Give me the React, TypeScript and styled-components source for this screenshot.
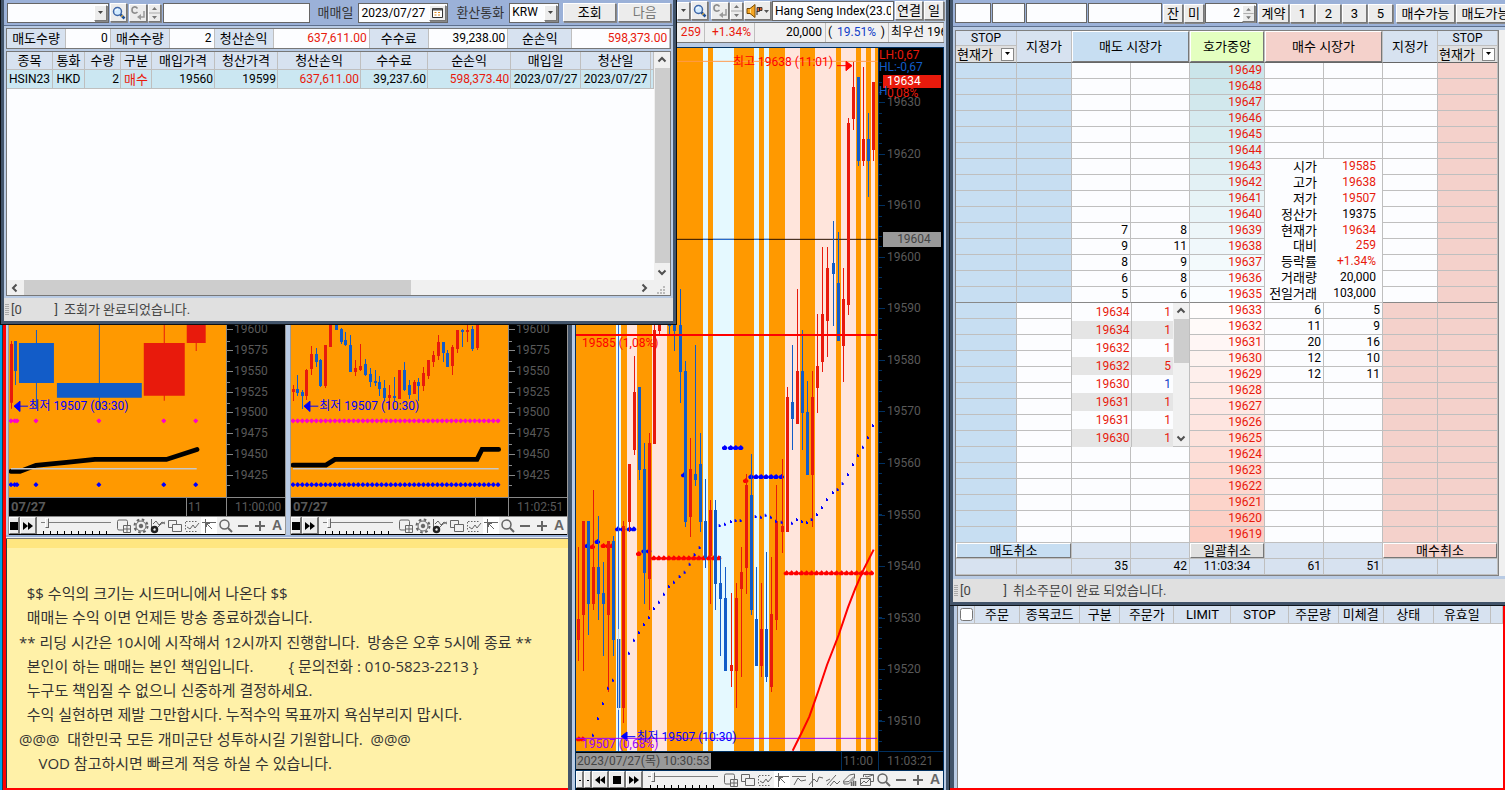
import React from "react";
import styled, { createGlobalStyle, css } from "styled-components";

const c = {
  slate: "#42546a",
  frame: "#b9cbe4",
  bar: "#9bb1d8",
  head: "#d7e2f0",
  sell: "#c7def2",
  buy: "#f4d1cb",
  red: "#e81a0c",
  blue: "#125cc8",
  line: "#bfbfbf",
  paper: "#fcfdff",
  orange: "#ff9900",
  cyan: "#e5f9ff",
  pink: "#ffe5dc",
  navy: "#003060",
  dim: "#595959",
};

const Global = createGlobalStyle`
  *, *::before, *::after { box-sizing: border-box; }
  html, body { margin: 0; padding: 0; }
  body, button, input, select, table {
    font-family: Roboto, "Noto Sans CJK KR", sans-serif;
    font-size: 13px;
    line-height: 15px;
    color: #000;
  }
  input { font-size: 12px; }
  button, input, select { margin: 0; padding: 0; border-radius: 0; }
`;

/* ---------- desktop ---------- */

const Desktop = styled.main`
  position: relative;
  display: grid;
  grid-template-columns: 572fr 377fr 556fr;
  min-height: 100vh;
  overflow: hidden;
  background: #00a2e8;
`;

const LeftColumn = styled.div`
  display: flex;
  flex-direction: column;
  min-width: 0;
  padding-top: 325px;
  border-left: 2px solid #00a2e8;
  border-right: 4px solid ${c.slate};
  background: #2b3844;
`;

const RedFrame = styled.div`
  flex: 1;
  display: flex;
  flex-direction: column;
  margin-left: 1px;
  border-left: 3px solid #f00;
  border-bottom: 2px solid #f00;
`;

/* ---------- shared controls ---------- */

const Bevel = css`
  border: 1px solid;
  border-color: #fff #777 #777 #fff;
  background: #ececec;
`;

const Button = styled.button<{ $w?: number; $muted?: boolean }>`
  ${Bevel}
  display: flex;
  align-items: center;
  justify-content: center;
  flex: none;
  height: 19px;
  white-space: nowrap;
  overflow: hidden;
  width: ${(p) => (p.$w ? `${p.$w}px` : "auto")};
  color: ${(p) => (p.$muted ? "#777" : "#000")};
  box-shadow: 1px 1px 0 #888;
`;

const Field = styled.input<{ $w?: number; $align?: string }>`
  ${(p) => (p.$w ? `flex: none; width: ${p.$w}px;` : "flex: 1; min-width: 0;")}
  height: 20px;
  padding: 0 2px;
  border: 1px solid #666;
  background: ${c.paper};
  text-align: ${(p) => p.$align || "left"};
`;

const Combo = styled.div<{ $w: number }>`
  display: flex;
  flex: none;
  align-items: center;
  width: ${(p) => p.$w}px;
  height: 20px;
  padding-right: 1px;
  border: 1px solid #666;
  background: ${c.paper};
  select, input {
    flex: 1;
    min-width: 0;
    height: 16px;
    padding: 0 2px;
    border: 0;
    background: transparent;
    appearance: none;
    font-size: 12px;
  }
`;

const Square = styled.span<{ $w?: number; $h?: number }>`
  ${Bevel}
  display: flex;
  flex: none;
  align-items: center;
  justify-content: center;
  width: ${(p) => p.$w || 13}px;
  height: ${(p) => p.$h || 16}px;
  box-shadow: 1px 1px 0 #888;
`;

const Down = ({ fill = "#444" }: { fill?: string }) => (
  <svg width="7" height="4" aria-hidden="true"><path d="M1 0h5L3.500 3z" fill={fill} /></svg>
);

const Stepper = ({ h = 18 }: { h?: number }) => (
  <Square $w={13} $h={h}>
    <svg width="11" height={h - 2} viewBox="0 0 11 16" aria-hidden="true">
      <path d="M3 5h5L5.500 2zM3 11h5L5.500 14z" fill="#777" />
      <path d="M0 8h11" stroke="#aaa" />
    </svg>
  </Square>
);

const SearchIcon = () => (
  <svg width="14" height="14" viewBox="0 0 14 14" aria-hidden="true">
    <circle cx="5.500" cy="5.500" r="4" fill="#d4ecff" stroke="#3f67a8" strokeWidth="1.500" />
    <path d="M3.500 5q.5-2 2.500-2" stroke="#fff" fill="none" />
    <path d="M8.500 8.500l4 4" stroke="#1b4f9a" strokeWidth="2.500" />
    <path d="M9.500 9.500l1 1" stroke="#e8b13c" strokeWidth="2" />
  </svg>
);

const ReturnIcon = () => (
  <svg width="16" height="16" viewBox="0 0 16 16" aria-hidden="true">
    <path d="M7.500 3.500Q6 1.500 4 2 2 2.500 2 5t2 3q2 .5 3.500-1" fill="none" stroke="#8c8c8c" strokeWidth="1.600" />
    <path d="M14 6v6H9" fill="none" stroke="#999" strokeWidth="1.500" />
    <path d="M7 12l4-3v6z" fill="#999" />
  </svg>
);

const SpeakerIcon = () => (
  <svg width="24" height="16" viewBox="0 0 24 16" aria-hidden="true">
    <path d="M1 5.500h3l5-4v13l-5-4H1z" fill="#f5a623" stroke="#7a4a00" />
    <path d="M4.500 6v4" stroke="#ffdf8a" />
    <path d="M11 4.500h2.500v4H11zM13.500 4.500H16v3h-2.500z" fill="#d9622b" stroke="#222" strokeWidth=".8" />
    <path d="M11 12V8" stroke="#222" />
    <path d="M18 7h5l-2.500 3z" fill="#555" />
  </svg>
);

const Chevron = ({ d }: { d: "up" | "down" | "left" | "right" }) => {
  const turn = { up: 0, right: 90, down: 180, left: 270 }[d];
  return (
    <svg width="10" height="10" viewBox="0 0 10 10" aria-hidden="true">
      <path d="M1.500 6.500L5 3l3.500 3.500" transform={`rotate(${turn} 5 5)`} fill="none" stroke="#505050" strokeWidth="2" />
    </svg>
  );
};

const Track = styled.div<{ $row?: boolean }>`
  display: flex;
  flex-direction: ${(p) => (p.$row ? "row" : "column")};
  align-items: center;
  justify-content: space-between;
  flex: none;
  ${(p) => (p.$row ? "height: 15px; padding: 0 4px 0 3px;" : "width: 16px; padding: 3px 0;")}
  background: #f0f0f0;
`;

const Thumb = styled.div<{ $row?: boolean; $size: string }>`
  background: #cdcdcd;
  ${(p) => (p.$row ? `height: 15px; width: ${p.$size}; margin: 0 auto 0 4px;` : `width: 15px; height: ${p.$size}; margin: 3px 0 auto;`)}
`;

const Grip = () => (
  <svg width="9" height="9" viewBox="0 0 9 9" aria-hidden="true" style={undefined}>
    <path d="M6 0h2v2H6zM6 3h2v2H6zM6 6h2v2H6zM3 3h2v2H3zM3 6h2v2H3zM0 6h2v2H0z" fill="#bbb" />
  </svg>
);

const GripGap = styled.span`
  display: flex;
  margin-left: 8px;
  align-self: flex-end;
`;

const StatusBar = styled.footer`
  display: flex;
  align-items: center;
  flex: none;
  height: 23px;
  padding-left: 8px;
  background: #e0e0e0;
  color: #444;
  white-space: pre;
  &::before {
    content: "";
    width: 4px;
    height: 11px;
    margin: 0 1px 0 -7px;
    background: repeating-linear-gradient(#aaa 0 1px, transparent 1px 2px);
  }
`;

const Code = styled.span`
  display: flex;
  justify-content: space-between;
  width: 48px;
  margin-right: 6px;
  padding-left: 1px;
`;

/* ---------- settlement window ---------- */

const Settlement = styled.section`
  position: absolute;
  top: 0;
  left: 0;
  z-index: 2;
  display: flex;
  flex-direction: column;
  width: 45%;
  height: 325px;
  border: solid #0c1014;
  border-width: 0 1px 1px;
  background: ${c.slate};
  padding: 0 3px 3px;
`;

const Bar = styled.div`
  display: flex;
  align-items: center;
  flex: none;
  height: 26px;
  padding: 0 2px 0 3px;
  border-bottom: 1px solid #5d6f8d;
  background: ${c.bar};
`;

const BarLabel = styled.label`
  flex: none;
  margin: 0 5px 0 8px;
  color: #333;
`;

const Spacer = styled.span<{ $w: number }>`
  flex: none;
  width: ${(p) => p.$w}px;
`;

const Body = styled.div`
  display: flex;
  flex-direction: column;
  flex: 1;
  min-height: 0;
  gap: 2px;
  padding: 2px;
  background: ${c.frame};
`;

const Summary = styled.dl`
  display: flex;
  flex: none;
  height: 21px;
  margin: 0;
  border: 1px solid #777;
  line-height: 19px;
  dt { text-align: center; background: ${c.head}; border-right: 1px solid ${c.line}; }
  dd { margin: 0; padding-right: 2px; font-size: 12px; text-align: right; background: ${c.paper}; border-right: 1px solid ${c.line}; }
`;

const Cell = styled.dt<{ $n: number; $red?: boolean }>`
  flex: ${(p) => p.$n} 1 0;
  color: ${(p) => (p.$red ? c.red : "#000")};
`;

const Sheet = styled.div`
  flex: 1;
  display: flex;
  flex-direction: column;
  min-height: 0;
  border: 1px solid #777;
  background: ${c.paper};
`;

const SheetMain = styled.div`
  flex: 1;
  display: flex;
  justify-content: space-between;
  align-items: stretch;
  min-height: 0;
`;

const DataTable = styled.table<{ $row?: string }>`
  flex: 1;
  align-self: flex-start;
  min-width: 0;
  table-layout: fixed;
  border-spacing: 0;
  th, td {
    padding: 0 1px;
    border-right: 1px solid ${c.line};
    border-bottom: 1px solid ${c.line};
    font-weight: 400;
    text-align: center;
    white-space: nowrap;
  }
  th { height: 18px; background: ${c.head}; }
  td { height: 19px; background: ${(p) => p.$row || c.paper}; }
`;

const Td = styled.td<{ $right?: boolean; $red?: boolean; $text?: boolean }>`
  && { text-align: ${(p) => (p.$right ? "right" : "center")}; }
  font-size: ${(p) => (p.$text ? 13 : 12)}px;
  color: ${(p) => (p.$red ? c.red : "#000")};
`;

const summary: [string, string, number, number, boolean?][] = [
  ["매도수량", "0", 60, 43],
  ["매수수량", "2", 60, 43],
  ["청산손익", "637,611.00", 60, 96, true],
  ["수수료", "39,238.00", 60, 79],
  ["순손익", "598,373.00", 65, 98, true],
];

const deals: [string, string, number, string, string?][] = [
  ["종목", "HSIN23", 46, "c"],
  ["통화", "HKD", 32, "c"],
  ["수량", "2", 36, "r"],
  ["구분", "매수", 31, "c", "red"],
  ["매입가격", "19560", 63, "r"],
  ["청산가격", "19599", 63, "r"],
  ["청산손익", "637,611.00", 83, "r", "red"],
  ["수수료", "39,237.60", 67, "r"],
  ["순손익", "598,373.40", 83, "r", "red"],
  ["매입일", "2023/07/27", 70, "c"],
  ["청산일", "2023/07/27", 70, "c"],
  ["", "", 3, "c"],
];

const SettlementWindow = () => (
  <Settlement>
    <Bar>
      <Combo $w={102}>
        <input aria-label="계좌" />
        <Square><Down /></Square>
      </Combo>
      <Spacer $w={1} />
      <Button $w={17} aria-label="검색"><SearchIcon /></Button>
      <Spacer $w={2} />
      <Square $w={18} $h={18}><ReturnIcon /></Square>
      <Spacer $w={1} />
      <Stepper />
      <Spacer $w={2} />
      <Field aria-label="계좌명" />
      <BarLabel htmlFor="day">매매일</BarLabel>
      <Combo $w={90}>
        <input id="day" defaultValue="2023/07/27" />
        <Square $w={17}>
          <svg width="11" height="10" viewBox="0 0 11 10" aria-hidden="true">
            <path d="M.5.5h10v9H.5z" fill="#fff" stroke="#333" />
            <path d="M1 1.500h9" stroke="#555" strokeWidth="2" />
            <path d="M2.500 4h2v1h-2zM6 4h2v1H6zM2.500 6.500h2v1h-2zM6 6.500h2v1H6z" fill="#e08a1e" />
          </svg>
        </Square>
      </Combo>
      <BarLabel htmlFor="cur">환산통화</BarLabel>
      <Combo $w={50}>
        <select id="cur"><option>KRW</option></select>
        <Square><Down /></Square>
      </Combo>
      <Spacer $w={4} />
      <Button $w={53}>조회</Button>
      <Spacer $w={2} />
      <Button $w={53} $muted>다음</Button>
    </Bar>
    <Body>
      <Summary>
        {summary.map(([k, v, a, b, red]) => (
          <React.Fragment key={k}>
            <Cell $n={a}>{k}</Cell>
            <Cell as="dd" $n={b} $red={red}>{v}</Cell>
          </React.Fragment>
        ))}
      </Summary>
      <Sheet>
        <SheetMain>
          <DataTable $row="#cbe7f2">
            <colgroup>{deals.map((d, i) => <col key={i} width={d[2]} />)}</colgroup>
            <thead><tr>{deals.map((d, i) => <th key={i}>{d[0]}</th>)}</tr></thead>
            <tbody>
              <tr>{deals.map((d, i) => <Td key={i} $right={d[3] === "r"} $red={!!d[4]} $text={i === 3}>{d[1]}</Td>)}</tr>
            </tbody>
          </DataTable>
          <Track><Chevron d="up" /><Thumb $size="88%" /><Chevron d="down" /></Track>
        </SheetMain>
        <Track $row><Chevron d="left" /><Thumb $row $size="59%" /><Chevron d="right" /><GripGap><Grip /></GripGap></Track>
      </Sheet>
    </Body>
    <StatusBar><Code><span>[0</span><span>]</span></Code>조회가 완료되었습니다.</StatusBar>
  </Settlement>
);

/* ---------- charts ---------- */

type Candle = [number, number, number, number, number, 0 | 1];

/* x, wick top, wick bottom, body top, body bottom, rising */
const mainCandles: Candle[] = [
  [19, 1640, 1982, 1857, 1920, 1], [34, 1563, 2012, 1563, 1845, 1], [49, 1563, 1905, 1563, 1812, 0],
  [64, 1470, 1830, 1701, 1812, 1], [79, 1548, 1860, 1701, 1782, 0], [94, 1686, 1968, 1779, 1812, 0],
  [109, 1623, 2076, 1623, 1845, 1], [124, 1608, 1968, 1623, 1920, 0], [154, 1563, 2168, 1578, 2124, 1],
  [172, 1392, 1595, 1392, 1565, 1], [187, 1068, 1365, 1176, 1350, 1], [202, 1161, 1440, 1161, 1410, 0],
  [217, 1329, 1812, 1407, 1719, 0], [232, 1299, 1830, 1329, 1737, 1], [247, 900, 1332, 990, 1332, 1],
  [262, 900, 1002, 900, 993, 1], [292, 900, 1002, 900, 978, 0], [307, 900, 1052, 900, 993, 0],
  [325, 867, 1209, 975, 1116, 0], [340, 1083, 1580, 1113, 1565, 0], [355, 1314, 1610, 1407, 1550, 1],
  [370, 1035, 1458, 1422, 1440, 0], [385, 1299, 1595, 1392, 1565, 0], [400, 1437, 1703, 1563, 1674, 0],
  [415, 1500, 1812, 1530, 1668, 1], [430, 1500, 1830, 1530, 1752, 0], [445, 1668, 1968, 1749, 1797, 0],
  [460, 1701, 2013, 1794, 2013, 0], [478, 1779, 2061, 1995, 2013, 1], [493, 1749, 2124, 1794, 2013, 1],
  [508, 1641, 2031, 1716, 1767, 1], [523, 1422, 1782, 1455, 1704, 1], [538, 1362, 1845, 1485, 1830, 0],
  [553, 1701, 1998, 1857, 1998, 0], [568, 1749, 2031, 1887, 1998, 1], [583, 1656, 2046, 1887, 2031, 0],
  [598, 1671, 2076, 1842, 2061, 1], [613, 1455, 1890, 1563, 1860, 1], [631, 1377, 1658, 1578, 1595, 1],
  [646, 1161, 1595, 1191, 1595, 1], [661, 1035, 1350, 1206, 1257, 0], [676, 867, 1272, 1113, 1272, 1],
  [691, 990, 1350, 1113, 1239, 0], [706, 1143, 1425, 1236, 1425, 0], [721, 1113, 1580, 1191, 1425, 1],
  [736, 942, 1239, 1098, 1164, 1], [751, 741, 1116, 942, 1086, 1], [766, 741, 1071, 804, 963, 1],
  [784, 663, 978, 789, 822, 0], [799, 696, 1023, 849, 1023, 0], [814, 804, 1146, 897, 1038, 1],
  [829, 354, 945, 369, 915, 1], [844, 186, 390, 261, 357, 1], [859, 231, 498, 231, 483, 0],
  [874, 201, 498, 417, 483, 1], [889, 339, 591, 417, 483, 0], [904, 246, 483, 246, 450, 1],
];

const minuteCandles: Candle[] = [
  [25, 375, 423, 387, 396, 1], [37, 345, 408, 387, 399, 0], [52, 390, 447, 396, 408, 0], [64, 327, 420, 330, 408, 1],
  [79, 258, 345, 282, 327, 1], [94, 264, 321, 282, 306, 0], [106, 297, 381, 300, 378, 0], [121, 255, 384, 255, 378, 1],
  [136, 195, 261, 195, 261, 1], [154, 195, 210, 195, 210, 0], [169, 204, 252, 207, 246, 0], [181, 216, 258, 240, 255, 0],
  [196, 225, 336, 255, 336, 0], [211, 300, 348, 324, 336, 1], [226, 252, 333, 318, 330, 1], [241, 297, 348, 312, 345, 0],
  [256, 324, 381, 342, 366, 0], [271, 330, 378, 363, 369, 0], [283, 348, 408, 366, 387, 0], [298, 360, 423, 384, 414, 0],
  [313, 375, 447, 405, 414, 1], [328, 351, 423, 408, 414, 0], [343, 330, 417, 330, 417, 1], [358, 306, 393, 330, 390, 0],
  [373, 360, 417, 375, 405, 0], [388, 360, 402, 366, 402, 1], [400, 354, 423, 366, 378, 0], [415, 321, 393, 339, 378, 1],
  [430, 300, 357, 300, 348, 1], [445, 273, 321, 285, 306, 1], [460, 225, 300, 246, 288, 1], [475, 246, 306, 246, 279, 0],
  [487, 270, 321, 279, 321, 0], [502, 255, 345, 261, 318, 1], [517, 210, 279, 210, 267, 1], [532, 207, 261, 210, 216, 0],
  [547, 195, 246, 210, 216, 1], [562, 198, 273, 207, 267, 0], [577, 195, 270, 195, 264, 1],
];

const Candles = ({ data }: { data: Candle[] }) => (
  <g shapeRendering="crispEdges">
    {data.map(([x, t, b, bt, bb, up]) => (
      <g key={x} fill={up ? c.red : c.blue}>
        <rect x={x - 1} y={t} width="3" height={b - t} />
        <rect x={x - 4} y={bt} width="9" height={bb - bt} />
      </g>
    ))}
  </g>
);

const bands: [number, number, string][] = [
  [132, 147, c.cyan], [165, 195, c.pink], [240, 285, c.pink], [393, 408, c.cyan], [423, 486, c.cyan],
  [546, 561, c.cyan], [576, 591, c.cyan], [639, 684, c.pink], [729, 792, c.pink], [807, 852, c.pink],
  [867, 882, c.pink], [897, 909, c.pink],
];

const trail: [number, number][] = [
  [63, 2206], [78, 2156], [93, 2111], [108, 2065], [123, 2041], [171, 1960], [186, 1921], [201, 1898], [216, 1874],
  [231, 1853], [246, 1826], [261, 1807], [276, 1783], [291, 1760], [306, 1747], [323, 1730], [338, 1717], [353, 1693],
  [368, 1664], [383, 1643], [443, 1577], [459, 1573], [477, 1565], [491, 1562], [506, 1562], [551, 1550], [567, 1552],
  [581, 1546], [597, 1552], [612, 1564], [629, 1567], [660, 1570], [675, 1559], [690, 1565], [705, 1568], [719, 1559],
  [735, 1544], [750, 1523], [765, 1499], [783, 1478], [797, 1469], [812, 1451], [828, 1424], [843, 1394], [858, 1367],
  [873, 1342], [888, 1313], [903, 1277],
];

const range = (from: number, to: number, step: number) => {
  const out: number[] = [];
  for (let v = from; v <= to; v += step) out.push(v);
  return out;
};

const dots: [number, number, string][] = [
  ...[458, 476, 491, 506].map((x) => [x, 1343, "#00f"] as [number, number, string]),
  ...[537, 552, 567, 582, 597, 612, 628].map((x) => [x, 1430, "#00f"] as [number, number, string]),
  ...[137, 152, 172, 185].map((x) => [x, 1587, "#00f"] as [number, number, string]),
  ...range(245, 445, 15).map((x) => [x, 1674, "#f00"] as [number, number, string]),
  ...range(643, 905, 15).map((x) => [x, 1719, "#f00"] as [number, number, string]),
  [335, 1425, "#00f"], [521, 1442, "#f00"], [46, 1637, "#00f"], [61, 1640, "#f00"], [76, 1625, "#00f"],
  [94, 1637, "#f00"], [108, 1637, "#f00"], [120, 1637, "#f00"], [200, 1661, "#f00"], [216, 1653, "#00f"],
  [230, 1653, "#00f"], [20, 2217, "#f00"], [32, 2217, "#f00"],
];

const PlotBox = styled.div<{ $bg: string }>`
  position: relative;
  min-width: 0;
  min-height: 0;
  overflow: hidden;
  background: ${(p) => p.$bg};
  > svg { position: absolute; inset: 0; width: 100%; height: 100%; }
`;

const Note = styled.span<{ $x: number; $y: number; $c: string }>`
  position: absolute;
  left: ${(p) => p.$x}%;
  top: ${(p) => p.$y}%;
  transform: translateY(-50%);
  color: ${(p) => p.$c};
  font-size: 12px;
  white-space: nowrap;
`;

const MainPlot = () => (
  <PlotBox $bg={c.orange}>
    <svg viewBox="12 144 906 2109" preserveAspectRatio="none" aria-hidden="true">
      {bands.map(([a, b, f]) => <rect key={a} x={a} y="144" width={b - a} height="2109" fill={f} />)}
      <path d="M12 184H918" stroke="#ff9a4d" strokeWidth="3" />
      <path d="M12 718H915" stroke="#2a1000" strokeWidth="3" />
      {bands.filter((b) => b[2] === c.cyan).map(([a, b]) => <rect key={a} x={a} y="716.500" width={b - a} height="3" fill="#2277ee" />)}
      {dots.map(([x, y, f]) => <path key={`${x}-${y}`} d={`M${x - 8} ${y - 1}l3-3h2l3-4 4 3 4 4v4l-4 4h-9l-3-4z`} fill={f} />)}
      <Candles data={mainCandles} />
      <rect x="135" y="1917" width="10" height="207" fill={c.blue} />
      <path d="M139.500 144V1887" stroke="#2a6ae0" strokeWidth="3" />
      <path d="M139.500 1887V2253" stroke="#c9c9d6" strokeWidth="3" />
      <path d="M139.500 2130V2253" stroke="#2a6ae0" strokeWidth="3" />
      {trail.map(([x, y]) => <path key={x} d={`M${x - 3} ${y - 5}h3v3h3v6h-6z`} fill="#00f" />)}
      <path d="M12 1005H915" stroke="#f00" strokeWidth="6" />
      <path d="M12 2215H915" stroke="#90f" strokeWidth="3" />
      <path d="M662 2252L690 2196 712 2150 740 2070 765 1995 800 1905 828 1822 850 1765 875 1708 905 1649" fill="none" stroke="#f00" strokeWidth="6" />
      <path d="M795 197h30M822 184l18 13-18 15z" fill="#f00" stroke="#f00" strokeWidth="3" />
      <path d="M190 2210h-28M165 2196l-17 13 17 13z" fill="#00f" stroke="#00f" strokeWidth="3" />
    </svg>
    <Note $x={52} $y={2} $c="#f00">최고 19638 (11:01)</Note>
    <Note $x={2} $y={42} $c="#f00">19585 (1,08%)</Note>
    <Note $x={20} $y={98} $c="#00f">최저 19507 (10:30)</Note>
    <Note $x={2} $y={99} $c="#90f">19507 (0,68%)</Note>
  </PlotBox>
);

const Axis = styled.div<{ $top: number; $bottom: number; $line: string; $pad: number }>`
  position: relative;
  display: flex;
  flex-direction: column;
  min-height: 0;
  overflow: hidden;
  padding: ${(p) => p.$top}px 0 ${(p) => p.$bottom}px;
  border-left: 1px solid ${(p) => p.$line};
  background: #000;
  color: ${c.dim};
  font-size: 12px;
  > span {
    flex: 1;
    display: flex;
    align-items: center;
    padding-left: ${(p) => p.$pad}px;
    background:
      linear-gradient(${(p) => p.$line}, ${(p) => p.$line}) 0 50% / 6px 1px no-repeat;
  }
`;

const AxisTag = styled.b<{ $y: number; $c: string; $bg?: string; $x?: number; $center?: boolean }>`
  position: absolute;
  left: ${(p) => p.$x ?? 4}px;
  right: 2px;
  top: ${(p) => p.$y}px;
  height: ${(p) => (p.$center ? 15 : 13)}px;
  line-height: ${(p) => (p.$center ? 15 : 13)}px;
  padding-left: ${(p) => (p.$bg ? 4 : 0)}px;
  text-align: ${(p) => (p.$center ? "center" : "left")};
  font-weight: 400;
  color: ${(p) => p.$c};
  background: ${(p) => p.$bg || "transparent"};
`;

const MinorTicks = styled.i<{ $c: string; $top: number; $bottom: number }>`
  position: absolute;
  left: 0;
  top: ${(p) => p.$top}px;
  bottom: ${(p) => p.$bottom}px;
  width: 3px;
  display: flex;
  flex-direction: column;
  justify-content: space-around;
  u { height: 1px; background: ${(p) => p.$c}; }
`;

const Ticks = ({ n, color, top, bottom }: { n: number; color: string; top: number; bottom: number }) => (
  <MinorTicks $c={color} $top={top} $bottom={bottom}>
    {range(1, n, 1).map((i) => <u key={i} />)}
  </MinorTicks>
);

const ChartWindow = styled.section`
  flex: 1;
  min-width: 0;
  display: grid;
  grid-template-columns: 1fr 59px;
  grid-template-rows: 1fr 20px 18px;
  border: solid #999;
  border-width: 0 1px;
  background: #000;
`;

const TimeRow = styled.div<{ $line: string }>`
  grid-column: 1 / -1;
  display: flex;
  align-items: stretch;
  border: solid ${(p) => p.$line};
  border-width: 1px 0;
  background: #000;
  color: ${c.dim};
  line-height: 18px;
  white-space: nowrap;
`;

const TimeCell = styled.span<{ $w?: number; $line?: string; $bold?: boolean; $pad: number }>`
  ${(p) => (p.$w ? `flex: none; width: ${p.$w}px;` : "flex: 1;")}
  padding-left: ${(p) => p.$pad}px;
  font-weight: ${(p) => (p.$bold ? 700 : 400)};
  font-size: ${(p) => (p.$bold ? 13 : 12)}px;
  border-left: ${(p) => (p.$line ? `1px solid ${p.$line}` : "0")};
`;

const Cursor = styled.span`
  flex: none;
  padding: 0 2px 0 1px;
  margin: 1px 0;
  font-size: 12px;
  line-height: 16px;
  background: #999;
  color: #444;
`;

/* ---------- chart tool strip ---------- */

const Strip = styled.div`
  grid-column: 1 / -1;
  display: flex;
  align-items: center;
  justify-content: space-between;
  gap: 1px;
  height: 17px;
  overflow: hidden;
  background: #f1f1f1;
`;

const Tool = styled.button<{ $raised?: boolean; $on?: boolean; $w?: number }>`
  display: flex;
  align-items: center;
  justify-content: center;
  flex: none;
  width: ${(p) => p.$w || 16}px;
  height: 17px;
  border: 0;
  background: ${(p) => (p.$on ? "#fff" : "transparent")};
  ${(p) => p.$raised && css`${Bevel} box-shadow: 1px 0 0 #777;`}
  color: #666;
  svg { flex: none; }
`;

const Group = styled.div`
  display: flex;
  flex: none;
  gap: 1px;
`;

const SliderBox = styled.label`
  flex: none;
  display: block;
  width: 70px;
  height: 16px;
  background:
    linear-gradient(#808080, #808080) 0 4px / 100% 1px no-repeat,
    repeating-linear-gradient(90deg, #000 0 1px, transparent 1px 7px) 2px 13px / 66px 3px no-repeat;
`;

const Slider = styled.input`
  display: block;
  width: 70px;
  height: 10px;
  margin: 0;
  background: transparent;
  appearance: none;
  &::-webkit-slider-thumb {
    appearance: none;
    width: 4px;
    height: 10px;
    border: 1px solid;
    border-color: #fff #666 #666 #fff;
    background: #e8e8e8;
  }
`;

const art: Record<string, React.ReactNode> = {
  add: <><path d="M7 12H3q-1.500 0-1.500-1.500V3.500Q1.500 2 3 2h7q1.500 0 1.500 1.500V7" /><path d="M7.500 7.500h7v7h-7zM11 7.500v7M7.500 11h7" /></>,
  gear: <><circle cx="8" cy="8" r="5" /><circle cx="8" cy="8" r="6.500" strokeDasharray="2.600 2.500" strokeWidth="2" /><circle cx="8" cy="8" r="1.800" fill="#666" /></>,
  chartset: <><path d="M1.500 1v9M1 10.500h3M3 6l3-3 3 4 3-3 3 2" /><circle cx="4.500" cy="11.500" r="2.500" stroke="#222" strokeWidth="2.500" /><path d="M8 9l3-3 4-2" /></>,
  windows: <><path d="M9.500 6V2.500h-8v7H5" /><path d="M5.500 6.500h9v7h-9z" fill="#f1f1f1" /></>,
  region: <><path d="M2 3.500h12M2 13.500h12M1.500 4v9" strokeDasharray="1.500 1.500" /><path d="M3 9l3 2 3-4 2 3 4-5" /></>,
  cross: <path d="M1 4.500h14M4.500 1v14M5 5l6 6M5.500 9V5.500H9" />,
  diag1: <path d="M1 4.500h14M3 13l4-7 3 3 5-1" />,
  diag2: <path d="M4.500 1v14M1 13l5-6 3 3 2-5 4 1" />,
  pen: <path d="M2 13l9-10M5 14l4-5 3 3 3-3M1 9l4-2" />,
  bars: <><path d="M1.500 9l6-6 5-1v4l-6 6H2zM2 10l5-.5 5-5" /><path d="M9.500 14v-4M11.500 14V8.500M13.500 14v-5" strokeWidth="1.500" /></>,
  multi: <><path d="M4.500 5V2.500h10v7H12" /><path d="M1.500 6.500h10v7h-10zM2 12l3-3 2 2 4-4M6 4l2 1 3-1 3-1" /></>,
  zoom: <><circle cx="6.500" cy="6.500" r="4.500" strokeWidth="1.500" /><path d="M10 10l4 4" strokeWidth="2" /></>,
  minus: <path d="M3 8h10" strokeWidth="2" />,
  plus: <path d="M3 8h10M8 3v10" strokeWidth="2" />,
  stop: <path d="M4 4h8v8H4z" fill="#000" stroke="none" />,
  next: <path d="M3 4l5 4-5 4zM8 4l5 4-5 4z" fill="#000" stroke="none" />,
  prev: <path d="M13 4L8 8l5 4zM8 4L3 8l5 4z" fill="#000" stroke="none" />,
  dot: <path d="M7 8h2v1H7z" fill="#000" stroke="none" />,
};

const Glyph = ({ n }: { n: string }) => (
  <svg width="16" height="16" viewBox="0 0 16 16" fill="none" stroke="#666" aria-hidden="true">{art[n]}</svg>
);

const Letter = styled.span`
  font-family: "Liberation Sans", sans-serif;
  font-size: 14px;
  font-weight: 700;
  color: #666;
`;

const ToolStrip = ({ transport, tools }: { transport: string[]; tools: string[] }) => (
  <Strip>
    <Group>
      {transport.map((t, i) => (
        <Tool key={i} aria-label={t} $raised $w={t === "dot" ? 7 : t === "stop" && transport.length < 3 ? 10 : 16}><Glyph n={t} /></Tool>
      ))}
    </Group>
    <SliderBox><Slider type="range" min={0} max={100} defaultValue={6} aria-label="재생 속도" /></SliderBox>
    <Group>
      {tools.map((t) => <Tool key={t} aria-label={t} $on={t === "cross"}><Glyph n={t} /></Tool>)}
      <Tool aria-label="글자"><Letter>A</Letter></Tool>
    </Group>
  </Strip>
);

const smallTools = ["add", "gear", "chartset", "windows", "region", "cross", "zoom", "minus", "plus"];
const mainTools = ["add", "windows", "region", "cross", "diag1", "diag2", "pen", "bars", "multi", "zoom", "minus", "plus"];

const SmallCharts = styled.div`
  flex: none;
  display: flex;
  gap: 4px;
  height: 210px;
  padding-left: 2px;
  background: ${c.frame};
`;

const Seam = styled.div`
  flex: none;
  height: 4px;
  border-top: 2px solid ${c.bar};
  border-bottom: 1px solid #777;
  background: #e8ecf2;
`;

const prices = ["19600", "19575", "19550", "19525", "19500", "19475", "19450", "19425"];

interface SmallProps {
  box: string;
  children: React.ReactNode;
  noteX: number;
  note: string;
  hour: string;
  clock: string;
  hourW: number;
}

const AxisRow = styled.span<{ $first?: boolean }>`
  && { margin-top: ${(p) => (p.$first ? -6 : 0)}px; }
`;

const SmallChart = ({ box, children, noteX, note, hour, clock, hourW }: SmallProps) => (
  <ChartWindow>
    <PlotBox $bg={c.orange}>
      <svg viewBox={box} preserveAspectRatio="none" aria-hidden="true">{children}</svg>
      <Note $x={noteX} $y={47} $c="#00f">{note}</Note>
    </PlotBox>
    <Axis $top={0} $bottom={11} $line="#888" $pad={7}>
      <Ticks n={8} color="#888" top={6} bottom={1} />
      {prices.map((p, i) => <AxisRow key={p} $first={i === 0}>{p}</AxisRow>)}
    </Axis>
    <TimeRow $line="#888">
      <TimeCell $pad={2} $bold>07/27</TimeCell>
      <TimeCell $pad={1} $w={hourW} $line="#888">{hour}</TimeCell>
      <TimeCell $pad={8} $w={59} $line="#888">{clock}</TimeCell>
    </TimeRow>
    <ToolStrip transport={["stop", "next"]} tools={smallTools} />
  </ChartWindow>
);

const HourDots = ({ xs }: { xs: number[] }) => (
  <g strokeWidth="4" strokeLinejoin="round">
    {xs.map((x) => (
      <g key={x}>
        <path d={`M${x - 5} 483l5-5 5 5-5 5z`} fill="#f0c" stroke="#f0c" />
        <path d={`M${x - 5} 675l5-5 5 5-5 5z`} fill="#00f" stroke="#00f" />
      </g>
    ))}
  </g>
);

const HourArt = () => (
  <>
    <g fill={c.blue}>
      <path d="M45 243h3v132h-3zM42 243h9v90h-9zM108 210h3v237h-3zM57 249h105v120H57zM297 195h3v252h-3zM171 369h255v45H171z" />
    </g>
    <g fill={c.red}>
      <path d="M33 243h3v204h-3zM30 252h9v177h-9zM492 195h3v228h-3zM432 249h123v159H432zM588 195h3v78h-3zM561 195h57v54h-57z" />
    </g>
    <path d="M84 439H55M60 424l-18 15 18 16z" fill="#00f" stroke="#00f" strokeWidth="3" />
    <HourDots xs={[33, 44, 51, 108, 297, 492, 588]} />
    <path d="M33 635H60L108 617 200 608 285 599H500L592 569" fill="none" stroke="#000" strokeWidth="14" strokeLinecap="round" />
    <path d="M33 627H591" stroke="#c8c8c8" strokeWidth="4" />
  </>
);

const MinuteArt = () => (
  <>
    <Candles data={minuteCandles} />
    <path d="M100 439H70M75 424l-18 15 18 16z" fill="#00f" stroke="#00f" strokeWidth="3" />
    <HourDots xs={range(24, 642, 14)} />
    <path d="M24 616H123L150 599H577L592 569H642" fill="none" stroke="#000" strokeWidth="14" strokeLinecap="round" />
    <path d="M24 627H642" stroke="#c8c8c8" strokeWidth="4" />
  </>
);

/* ---------- memo ---------- */

const Memo = styled.article`
  flex: 1;
  margin-left: 1px;
  padding: 33px 12px 12px;
  border-top: 9px solid #ffe680;
  background: #fff1a8;
`;

const MemoText = styled.div`
  display: grid;
  grid-auto-rows: 1fr;
  height: 194px;
  align-items: center;
  font-family: "Open Sans", "Noto Sans CJK KR", sans-serif;
  font-size: 15px;
  line-height: 24px;
  color: #333;
  white-space: pre;
  p { margin: 0; }
`;

const memo = [
  "  $$ 수익의 크기는 시드머니에서 나온다 $$",
  "  매매는 수익 이면 언제든 방송 종료하겠습니다.",
  "** 리딩 시간은 10시에 시작해서 12시까지 진행합니다.  방송은 오후 5시에 종료 **",
  "  본인이 하는 매매는 본인 책임입니다.         { 문의전화 : 010-5823-2213 }",
  "  누구도 책임질 수 없으니 신중하게 결정하세요.",
  "  수익 실현하면 제발 그만합시다. 누적수익 목표까지 욕심부리지 맙시다.",
  "@@@  대한민국 모든 개미군단 성투하시길 기원합니다.  @@@",
  "     VOD 참고하시면 빠르게 적응 하실 수 있습니다.",
];

/* ---------- index chart ---------- */

const MiddleColumn = styled.section`
  display: flex;
  flex-direction: column;
  min-width: 0;
  border-left: 3px solid ${c.frame};
  border-right: 3px solid ${c.slate};
  padding-right: 2px;
  background: ${c.frame};
`;

const QuoteTools = styled.div`
  display: flex;
  align-items: center;
  justify-content: flex-end;
  flex: none;
  height: 21px;
  gap: 1px;
  background: ${c.bar};
`;

const QuoteRow = styled.div`
  display: flex;
  justify-content: flex-end;
  flex: none;
  height: 21px;
  margin-top: 1px;
  border-top: 1px solid #777;
  border-bottom: 1px solid #777;
  background: #f0f0f0;
  font-size: 12px;
  line-height: 19px;
  white-space: nowrap;
`;

const Quote = styled.span<{ $w: number; $c?: string; $left?: boolean; $spread?: boolean }>`
  flex: none;
  width: ${(p) => p.$w}px;
  padding: 0 3px 0 2px;
  overflow: hidden;
  text-align: ${(p) => (p.$left ? "left" : "right")};
  ${(p) => p.$spread && "display: flex; justify-content: space-between;"}
  color: ${(p) => p.$c || "#000"};
  border-right: 1px solid ${c.line};
  em { font-style: normal; color: #1040c8; }
`;

const ChartFrame = styled.div`
  flex: 1;
  display: grid;
  grid-template-columns: 1fr 65px;
  grid-template-rows: 1fr 20px 19px;
  margin-top: 4px;
  border: solid ${c.navy};
  border-width: 1px 1px 0;
  background: #000;
`;

const mainPrices = range(0, 12, 1).map((i) => 19630 - i * 10);

const IndexChart = () => (
  <MiddleColumn>
    <QuoteTools>
      <Square $h={18}><Down /></Square>
      <Button $w={17} aria-label="종목 검색"><SearchIcon /></Button>
      <Spacer $w={1} />
      <Square $w={18} $h={18}><ReturnIcon /></Square>
      <Stepper />
      <Button $w={27} aria-label="소리"><SpeakerIcon /></Button>
      <Field $w={122} aria-label="종목명" defaultValue="Hang Seng Index(23.07)" />
      <Button $w={28}>연결</Button>
      <Button $w={20}>일</Button>
    </QuoteTools>
    <QuoteRow>
      <Quote $w={30} $c={c.red}>259</Quote>
      <Quote $w={50} $c={c.red}>+1.34%</Quote>
      <Quote $w={71}>20,000</Quote>
      <Quote $w={63} $spread><span>(</span><em>19.51%</em><span>)</span></Quote>
      <Quote $w={55} $left>최우선 19634</Quote>
    </QuoteRow>
    <ChartFrame>
      <MainPlot />
      <Axis $top={29} $bottom={4} $line={c.navy} $pad={8}>
        <Ticks n={65} color={c.navy} top={29} bottom={4} />
        {mainPrices.map((p) => <span key={p}>{p}</span>)}
        <AxisTag $y={1} $x={0} $c={c.red}>LH:0,67</AxisTag>
        <AxisTag $y={13} $x={0} $c={c.blue}>HL:-0,67</AxisTag>
        <AxisTag $y={27} $c="#fff" $bg={c.red}>19634</AxisTag>
        <AxisTag $y={37} $x={0} $c={c.blue}>H</AxisTag>
        <AxisTag $y={39} $x={8} $c={c.red}>0,08%</AxisTag>
        <AxisTag $y={184} $c="#444" $bg="#999" $center>19604</AxisTag>
      </Axis>
      <TimeRow $line={c.navy}>
        <Cursor>2023/07/27(목) 10:30:53</Cursor>
        <TimeCell $pad={0} />
        <TimeCell $pad={1} $w={37} $line={c.navy}>11:00</TimeCell>
        <TimeCell $pad={8} $w={65} $line={c.navy}>11:03:21</TimeCell>
      </TimeRow>
      <ToolStrip transport={["dot", "dot", "prev", "stop", "next"]} tools={mainTools} />
    </ChartFrame>
  </MiddleColumn>
);

/* ---------- order ladder ---------- */

const RightColumn = styled.div`
  display: flex;
  flex-direction: column;
  min-width: 0;
  background: #10161c;
  border-left: 1px solid #0c1014;
`;

const LadderWindow = styled.section`
  flex: none;
  display: flex;
  flex-direction: column;
  border: solid ${c.slate};
  border-width: 0 0 3px 3px;
`;

const LadderBar = styled(Bar)`
  height: 27px;
  overflow: hidden;
  gap: 1px;
  padding: 0 0 0 2px;
`;

const LadderBody = styled.div`
  display: flex;
  padding: 3px 0 3px 2px;
  background: ${c.frame};
`;

const Ladder = styled.table`
  flex: 1;
  min-width: 0;
  table-layout: fixed;
  border-spacing: 0;
  border: 1px solid #808080;
  background: ${c.paper};
  th, td { padding: 0; font-weight: 400; white-space: nowrap; }
  td {
    height: 16px;
    border-right: 1px solid ${c.line};
    border-bottom: 1px solid ${c.line};
    font-size: 12px;
  }
`;

const Th = styled.th`
  height: 32px;
  background: ${c.head};
  border-right: 1px solid ${c.line};
  border-bottom: 1px solid #666;
`;

const HeadButton = styled.button<{ $bg: string; $h?: number }>`
  display: block;
  width: 100%;
  height: ${(p) => p.$h || 31}px;
  border: 1px solid;
  border-color: #fff #777 #777 #fff;
  background: ${(p) => p.$bg};
  line-height: ${(p) => (p.$h ? 13 : 15)}px;
`;

const StopHead = styled.div`
  display: flex;
  flex-direction: column;
  height: 31px;
  > span { height: 15px; border-bottom: 1px solid ${c.line}; font-size: 12px; line-height: 14px; }
  > div { display: flex; justify-content: space-between; align-items: center; height: 16px; padding: 0 2px 0 1px; background: #e0e0e0; }
  select { flex: 1; min-width: 0; height: 15px; border: 0; background: transparent; appearance: none; }
`;

const SmallDrop = styled.span`
  display: flex;
  align-items: center;
  justify-content: center;
  width: 13px;
  height: 13px;
  border: 1px solid #888;
  background: #fff;
`;

const LTd = styled.td<{ $bg?: string; $c?: string; $mid?: boolean; $center?: boolean }>`
  background: ${(p) => p.$bg || c.paper};
  color: ${(p) => p.$c || "#000"};
  text-align: ${(p) => (p.$center ? "center" : "right")};
  && { padding-right: ${(p) => (p.$center ? 0 : 2)}px; }
  ${(p) => p.$mid && "&& { border-bottom-color: #888; }"}
`;

const SpanTd = styled.td`
  vertical-align: top;
`;

const Info = styled.dl`
  display: grid;
  grid-template-columns: 52px 1fr;
  grid-auto-rows: 1fr;
  height: 143px;
  margin: 0;
  padding-right: 6px;
  text-align: right;
  dt { margin-left: -8px; font-size: 13px; }
  dd { margin: 0; }
`;

const InfoValue = styled.dd<{ $red: boolean }>`
  color: ${(p) => (p.$red ? c.red : "#000")};
`;

const TickBox = styled.div`
  display: flex;
  height: 143px;
`;

const TickTable = styled.table`
  flex: 1;
  border-spacing: 0;
  table-layout: fixed;
  color: ${c.red};
  && td { height: 18px; padding-right: 2px; border: 0; text-align: right; }
  && td:first-child { border-right: 1px solid ${c.line}; padding-right: 1px; }
  tr:nth-child(even) { background: #e5e5e5; }
  tr:nth-child(5) td:last-child { color: #1040c8; }
`;

const EdgeTrack = styled.div`
  flex: none;
  width: 6px;
  background: #f0f0f0;
`;

const info: [string, string, boolean][] = [
  ["시가", "19585", true], ["고가", "19638", true], ["저가", "19507", true], ["정산가", "19375", false],
  ["현재가", "19634", true], ["대비", "259", true], ["등락률", "+1.34%", true], ["거래량", "20,000", false],
  ["전일거래", "103,000", false],
];

const ticks: [string, string][] = [
  ["19634", "1"], ["19634", "1"], ["19632", "1"], ["19632", "5"], ["19630", "1"], ["19631", "1"], ["19631", "1"], ["19630", "1"],
];

const asks = [["7", "8"], ["9", "11"], ["8", "9"], ["6", "8"], ["5", "6"]];
const bids = [["6", "5"], ["11", "9"], ["20", "16"], ["12", "10"], ["12", "11"]];

const shade = (i: number) => {
  const mix = (a: number[], b: number[], t: number) => `rgb(${a.map((v, k) => Math.round(v + (b[k] - v) * t)).join(",")})`;
  return i < 15 ? mix([203, 229, 234], [250, 253, 255], i / 14) : mix([255, 253, 253], [252, 205, 194], (i - 15) / 14);
};

const ladderCols = [61, 55, 59, 59, 75, 59, 59, 55, 60];

const StopHeader = ({ id }: { id: string }) => (
  <Th>
    <StopHead>
      <span>STOP</span>
      <div>
        <select aria-label={id}><option>현재가</option></select>
        <SmallDrop><Down fill="#000" /></SmallDrop>
      </div>
    </StopHead>
  </Th>
);

const LadderRow = ({ i }: { i: number }) => {
  const top = i < 15;
  const mid = i === 14;
  const ask = i >= 10 && i < 15 ? asks[i - 10] : ["", ""];
  const bid = i >= 15 && i < 20 ? bids[i - 15] : ["", ""];
  return (
    <tr>
      <LTd $bg={c.sell} $mid={mid} />
      <LTd $bg={top ? c.sell : c.paper} $mid={mid} />
      {i === 15 && (
        <SpanTd colSpan={2} rowSpan={9}>
          <TickBox>
            <TickTable>
              <colgroup><col width={59} /><col width={41} /></colgroup>
              <tbody>{ticks.map((t, k) => <tr key={k}><td>{t[0]}</td><td>{t[1]}</td></tr>)}</tbody>
            </TickTable>
            <Track><Chevron d="up" /><Thumb $size="44px" /><Chevron d="down" /></Track>
          </TickBox>
        </SpanTd>
      )}
      {(i < 15 || i > 23) && <><LTd $mid={mid}>{ask[0]}</LTd><LTd $mid={mid}>{ask[1]}</LTd></>}
      <LTd $bg={shade(i)} $c={c.red} $mid={mid}>{(top ? 19649 : 19648) - i}</LTd>
      {i === 6 && (
        <SpanTd colSpan={2} rowSpan={9}>
          <Info>
            {info.map(([k, v, r]) => <React.Fragment key={k}><dt>{k}</dt><InfoValue $red={r}>{v}</InfoValue></React.Fragment>)}
          </Info>
        </SpanTd>
      )}
      {(i < 6 || i > 14) && <><LTd>{bid[0]}</LTd><LTd>{bid[1]}</LTd></>}
      <LTd $bg={top ? c.paper : c.buy} $mid={mid} />
      <LTd $bg={c.buy} $mid={mid} />
    </tr>
  );
};

const LadderPanel = () => (
  <LadderWindow>
    <LadderBar>
      <Group as="div">
        <Field $w={36} aria-label="계좌번호" />
        <Field $w={33} aria-label="비밀번호" />
        <Field $w={61} aria-label="종목코드" />
        <Field $w={74} aria-label="종목명" />
      </Group>
      <Button $w={20}>잔</Button>
      <Button $w={20}>미</Button>
      <Combo $w={52}>
        <Field as="input" $align="right" aria-label="주문수량" defaultValue="2" />
        <Stepper h={17} />
      </Combo>
      <Button $w={31}>계약</Button>
      {["1", "2", "3", "5"].map((n) => <Button key={n} $w={25}>{n}</Button>)}
      <Spacer $w={1} />
      <Button $w={59}>매수가능</Button>
      <Button $w={59}>매도가능</Button>
    </LadderBar>
    <LadderBody>
      <Ladder>
        <colgroup>{ladderCols.map((w, i) => <col key={i} width={w} />)}</colgroup>
        <thead>
          <tr>
            <StopHeader id="매도 STOP 기준" />
            <Th>지정가</Th>
            <Th colSpan={2}><HeadButton $bg={c.sell}>매도 시장가</HeadButton></Th>
            <Th><HeadButton $bg="#e4ffc0">호가중앙</HeadButton></Th>
            <Th colSpan={2}><HeadButton $bg={c.buy}>매수 시장가</HeadButton></Th>
            <Th>지정가</Th>
            <StopHeader id="매수 STOP 기준" />
          </tr>
        </thead>
        <tbody>{range(0, 29, 1).map((i) => <LadderRow key={i} i={i} />)}</tbody>
        <tfoot>
          <tr>
            <LTd colSpan={2} $center $bg={c.head}><HeadButton $h={15} $bg={c.sell}>매도취소</HeadButton></LTd>
            <LTd $bg={c.head} /><LTd $bg={c.head} />
            <LTd $center $bg={c.head}><HeadButton $h={15} $bg="#e0e0e0">일괄취소</HeadButton></LTd>
            <LTd $bg={c.head} /><LTd $bg={c.head} />
            <LTd colSpan={2} $center $bg={c.head}><HeadButton $h={15} $bg={c.buy}>매수취소</HeadButton></LTd>
          </tr>
          <tr>
            {["", "", "35", "42", "11:03:34", "61", "51", "", ""].map((v, i) => (
              <LTd key={i} $bg={c.head} $center={i === 4}>{v}</LTd>
            ))}
          </tr>
        </tfoot>
      </Ladder>
      <EdgeTrack />
    </LadderBody>
    <StatusBar><Code><span>[0</span><span>]</span></Code>취소주문이 완료 되었습니다.</StatusBar>
  </LadderWindow>
);

/* ---------- open orders ---------- */

const Orders = styled.section`
  flex: 1;
  display: flex;
  margin-top: 1px;
  border: solid #f00;
  border-width: 0 2px 2px 0;
  background: ${c.paper};
  &::before {
    content: "";
    width: 8px;
    background: linear-gradient(90deg, ${c.slate} 0 4px, ${c.frame} 4px 7px, #808080 7px);
  }
`;

const Check = styled.input`
  display: block;
  width: 13px;
  height: 13px;
  margin: 0 auto;
`;

const orderCols: [string, number][] = [
  ["", 17], ["주문", 45], ["종목코드", 60], ["구분", 40], ["주문가", 54], ["LIMIT", 57], ["STOP", 57],
  ["주문량", 50], ["미체결", 45], ["상태", 50], ["유효일", 57], [" ", 12],
];

export default function App() {
  return (
    <>
      <Global />
      <Desktop>
        <SettlementWindow />
        <LeftColumn>
          <RedFrame>
            <SmallCharts>
              <SmallChart box="27 195 652 517" noteX={9} note="최저 19507 (03:30)" hour="11" clock="11:00:00" hourW={40}>
                <HourArt />
              </SmallChart>
              <SmallChart box="18 195 652 517" noteX={13} note="최저 19507 (10:30)" hour="" clock="11:02:51" hourW={33}>
                <MinuteArt />
              </SmallChart>
            </SmallCharts>
            <Seam />
            <Memo>
              <MemoText>{memo.map((m) => <p key={m}>{m}</p>)}</MemoText>
            </Memo>
          </RedFrame>
        </LeftColumn>
        <IndexChart />
        <RightColumn>
          <LadderPanel />
          <Orders>
            <DataTable>
              <colgroup>{orderCols.map((o, i) => <col key={i} width={o[1]} />)}</colgroup>
              <thead>
                <tr>{orderCols.map(([t], i) => <th key={i}>{i === 0 ? <Check type="checkbox" aria-label="전체 선택" /> : t}</th>)}</tr>
              </thead>
            </DataTable>
          </Orders>
        </RightColumn>
      </Desktop>
    </>
  );
}
